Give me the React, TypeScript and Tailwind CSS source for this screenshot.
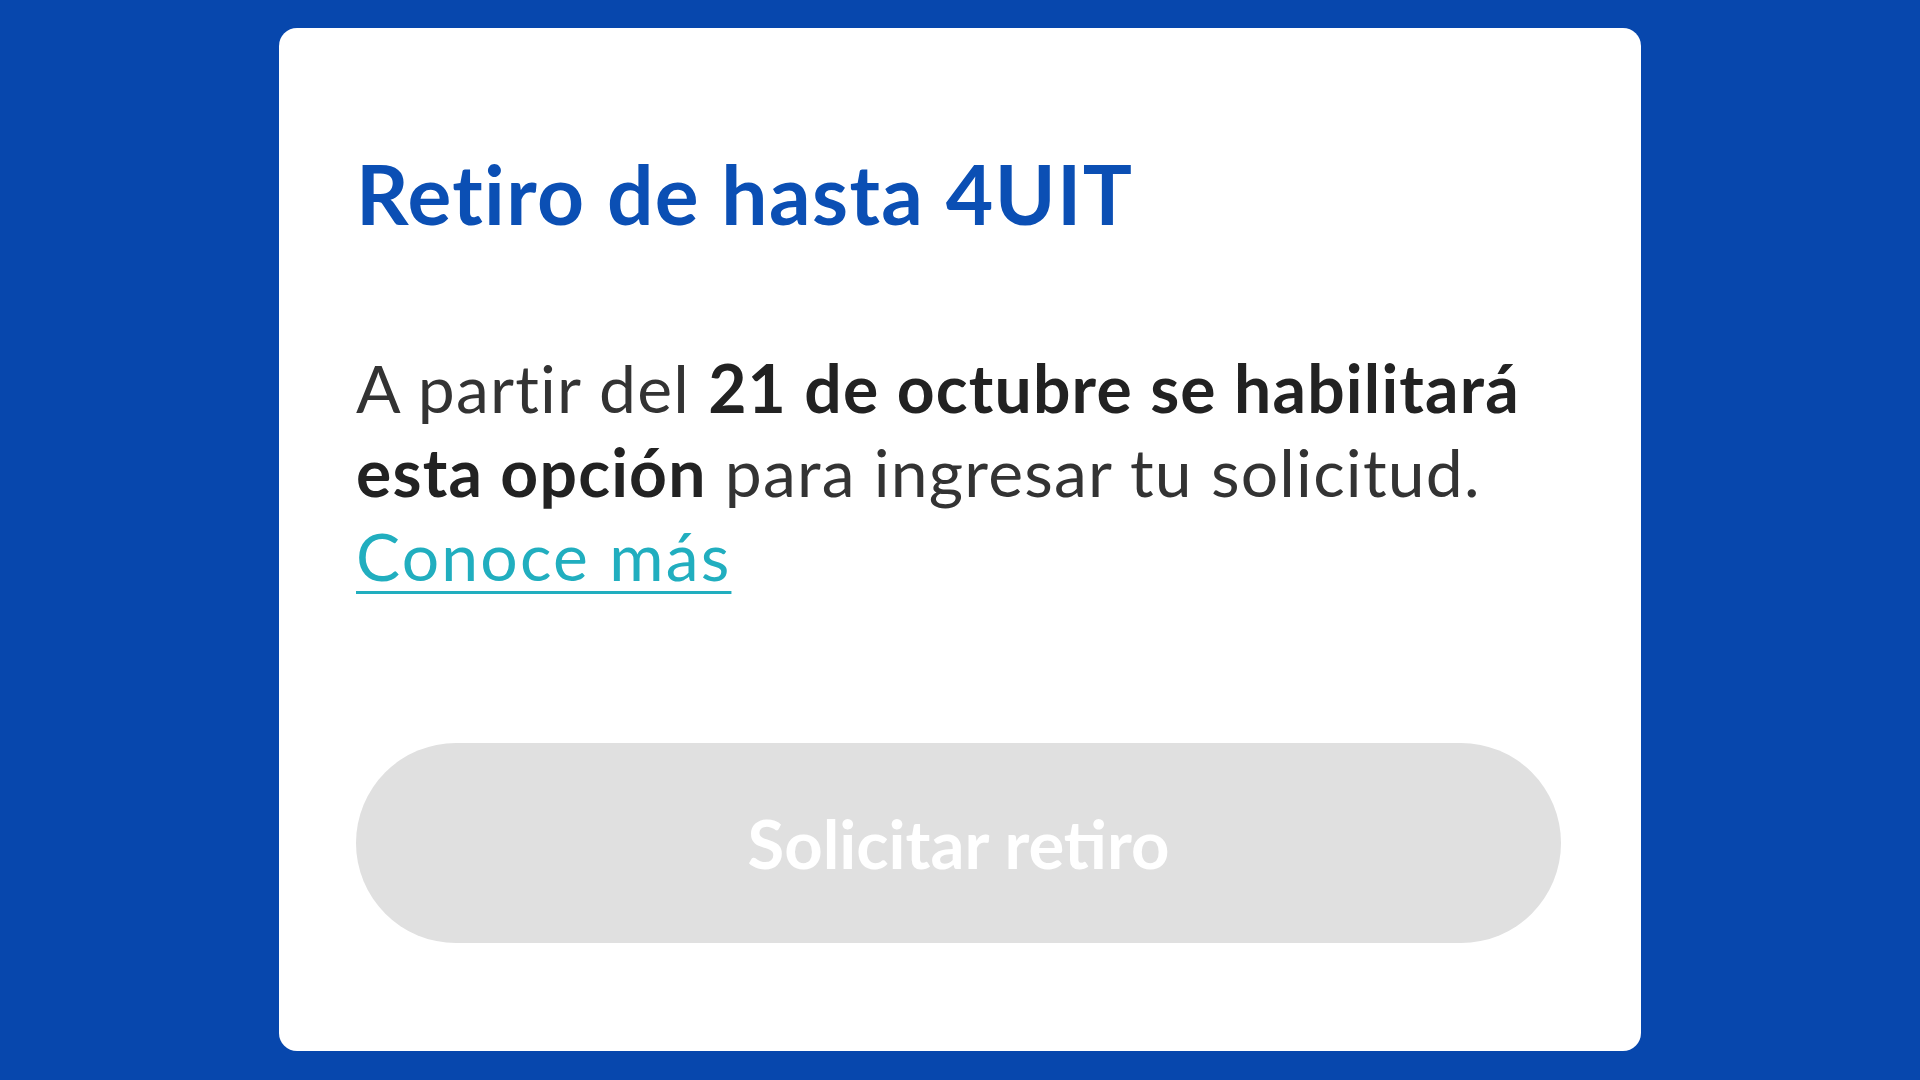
export default function App() {
  return (
    <div className="min-h-screen w-full bg-[#0747ad] pt-[28px] font-['Lato',sans-serif]">
      <div className="ml-[279px] flex h-[1023px] w-[1362px] flex-col rounded-[18px] bg-white pl-[77px] pr-[60px] pt-[124px]">
        {/* Title */}
        <h1 className="text-[82px] font-bold leading-none tracking-[1.4px] text-[#0b4fb4]">
          Retiro de hasta 4UIT
        </h1>

        {/* Description */}
        <p className="mt-[112px] text-[66px] leading-[84px] tracking-[1.2px] text-[#333333]">
          A partir del{" "}
          <span className="font-bold text-[#222222]">
            21 de octubre se habilitará esta opción
          </span>{" "}
          para ingresar tu solicitud.
          <br />
          <a
            href="#"
            className="tracking-[2.2px] text-[#21aebf] underline decoration-[3px] underline-offset-[10px]"
          >
            Conoce más
          </a>
        </p>

        {/* Disabled button */}
        <button
          type="button"
          disabled
          className="mt-[145px] flex h-[200px] w-[1205px] items-center justify-center rounded-full bg-[#e0e0e0] text-[67px] font-bold text-white"
        >
          Solicitar retiro
        </button>
      </div>
    </div>
  );
}
